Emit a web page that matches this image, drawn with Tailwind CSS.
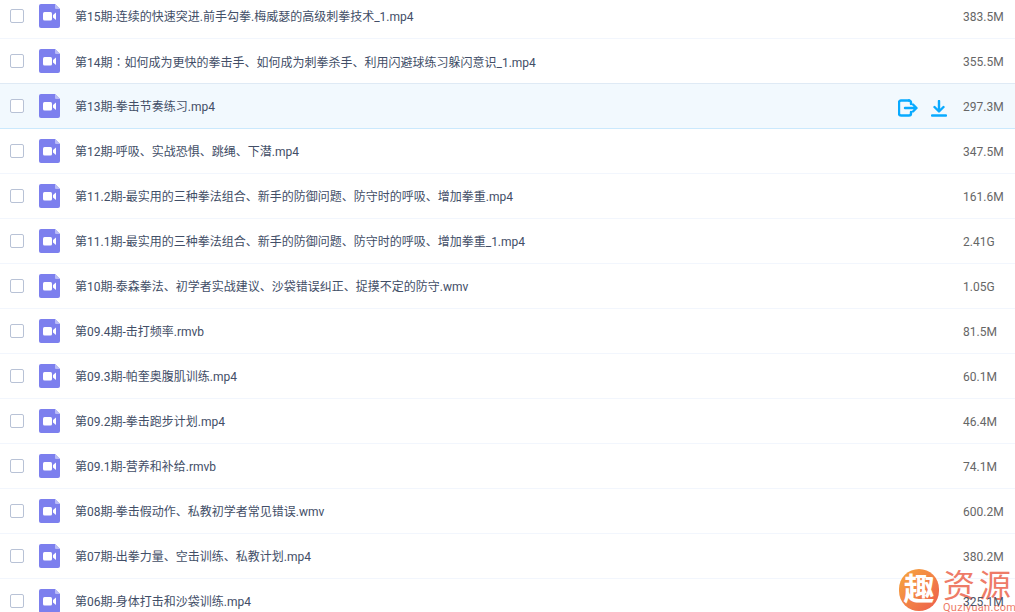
<!DOCTYPE html>
<html lang="en">
<head>
    <meta charset="UTF-8">
    <title>文件列表</title>
    <script src="https://cdn.jsdelivr.net/npm/@tailwindcss/browser@4"></script>
</head>
<body class="bg-white h-[612px] overflow-hidden relative font-['Roboto','Noto_Sans_CJK_SC',sans-serif] text-xs text-[#424e67]">
    <svg class="hidden">
        <symbol id="video" viewBox="0 0 21 24">
            <path d="M2 0H16L21 5V22A2 2 0 0 1 19 24H2A2 2 0 0 1 0 22V2A2 2 0 0 1 2 0Z" fill="#7c7fee"/>
            <path d="M16 0L21 5H17A1 1 0 0 1 16 4Z" fill="#b9bbf6"/>
            <rect x="4" y="8" width="9" height="8.5" rx="1.5" fill="#fff"/>
            <path d="M14 11L17 8.5V16L14 13.5Z" fill="#fff"/>
        </symbol>
    </svg>

    <ul id="list" class="-mt-[6px]">
        <li class="h-[45px] flex items-center border-b border-[#f2f6fd]">
            <span class="w-[14px] h-[14px] ml-[10px] border border-[#b8c2d6] rounded-[2px] bg-white"></span>
            <svg class="w-[21px] h-[24px] ml-[15px]"><use href="#video"/></svg>
            <span class="ml-[15px] flex-1 pt-[2px]">第15期-连续的快速突进.前手勾拳.梅威瑟的高级刺拳技术_1.mp4</span>
            <span class="w-[52px] pt-[2px] text-[#666]">383.5M</span>
        </li>
        <li class="h-[45px] flex items-center border-b border-[#dfeaf5]">
            <span class="w-[14px] h-[14px] ml-[10px] border border-[#b8c2d6] rounded-[2px] bg-white"></span>
            <svg class="w-[21px] h-[24px] ml-[15px]"><use href="#video"/></svg>
            <span class="ml-[15px] flex-1 pt-[2px]">第14期<span class="font-['Noto_Sans_CJK_TC',sans-serif]">：</span>如何成为更快的拳击手、如何成为刺拳杀手、利用闪避球练习躲闪意识_1.mp4</span>
            <span class="w-[52px] pt-[2px] text-[#666]">355.5M</span>
        </li>
        <li class="h-[45px] flex items-center border-b border-[#cbe9fd] bg-[#f2f9fe]">
            <span class="w-[14px] h-[14px] ml-[10px] border border-[#b8c2d6] rounded-[2px] bg-white"></span>
            <svg class="w-[21px] h-[24px] ml-[15px]"><use href="#video"/></svg>
            <span class="ml-[15px] flex-1 pt-[2px]">第13期-拳击节奏练习.mp4</span>
            <svg class="w-[20px] h-[18px] mr-[13px] mt-[4px]" viewBox="0 0 20 18" fill="none" stroke="#09aaff" stroke-width="2.400" stroke-linecap="round" stroke-linejoin="round">
                <path d="M11 1.5H3A2 2 0 0 0 1 3.500V14.500A2 2 0 0 0 3 16.500H11A2 2 0 0 0 13 14.500V13"/>
                <path d="M13 5V3.500A2 2 0 0 0 11 1.500"/>
                <path d="M7 9H18M15 5.500L18.500 9L15 12.500"/>
            </svg>
            <svg class="w-[16px] h-[17px] mr-[16px] mt-[4px]" viewBox="0 0 16 17" fill="none" stroke="#09aaff" stroke-width="2.400" stroke-linecap="round" stroke-linejoin="round">
                <path d="M8 1V11M3.500 7L8 11.500L12.500 7"/>
                <path d="M1 15.500H15"/>
            </svg>
            <span class="w-[52px] pt-[2px] text-[#666]">297.3M</span>
        </li>
        <li class="h-[45px] flex items-center border-b border-[#f2f6fd]">
            <span class="w-[14px] h-[14px] ml-[10px] border border-[#b8c2d6] rounded-[2px] bg-white"></span>
            <svg class="w-[21px] h-[24px] ml-[15px]"><use href="#video"/></svg>
            <span class="ml-[15px] flex-1 pt-[2px]">第12期-呼吸、实战恐惧、跳绳、下潜.mp4</span>
            <span class="w-[52px] pt-[2px] text-[#666]">347.5M</span>
        </li>
        <li class="h-[45px] flex items-center border-b border-[#f2f6fd]">
            <span class="w-[14px] h-[14px] ml-[10px] border border-[#b8c2d6] rounded-[2px] bg-white"></span>
            <svg class="w-[21px] h-[24px] ml-[15px]"><use href="#video"/></svg>
            <span class="ml-[15px] flex-1 pt-[2px]">第11.2期-最实用的三种拳法组合、新手的防御问题、防守时的呼吸、增加拳重.mp4</span>
            <span class="w-[52px] pt-[2px] text-[#666]">161.6M</span>
        </li>
        <li class="h-[45px] flex items-center border-b border-[#f2f6fd]">
            <span class="w-[14px] h-[14px] ml-[10px] border border-[#b8c2d6] rounded-[2px] bg-white"></span>
            <svg class="w-[21px] h-[24px] ml-[15px]"><use href="#video"/></svg>
            <span class="ml-[15px] flex-1 pt-[2px]">第11.1期-最实用的三种拳法组合、新手的防御问题、防守时的呼吸、增加拳重_1.mp4</span>
            <span class="w-[52px] pt-[2px] text-[#666]">2.41G</span>
        </li>
        <li class="h-[45px] flex items-center border-b border-[#f2f6fd]">
            <span class="w-[14px] h-[14px] ml-[10px] border border-[#b8c2d6] rounded-[2px] bg-white"></span>
            <svg class="w-[21px] h-[24px] ml-[15px]"><use href="#video"/></svg>
            <span class="ml-[15px] flex-1 pt-[2px]">第10期-泰森拳法、初学者实战建议、沙袋错误纠正、捉摸不定的防守.wmv</span>
            <span class="w-[52px] pt-[2px] text-[#666]">1.05G</span>
        </li>
        <li class="h-[45px] flex items-center border-b border-[#f2f6fd]">
            <span class="w-[14px] h-[14px] ml-[10px] border border-[#b8c2d6] rounded-[2px] bg-white"></span>
            <svg class="w-[21px] h-[24px] ml-[15px]"><use href="#video"/></svg>
            <span class="ml-[15px] flex-1 pt-[2px]">第09.4期-击打频率.rmvb</span>
            <span class="w-[52px] pt-[2px] text-[#666]">81.5M</span>
        </li>
        <li class="h-[45px] flex items-center border-b border-[#f2f6fd]">
            <span class="w-[14px] h-[14px] ml-[10px] border border-[#b8c2d6] rounded-[2px] bg-white"></span>
            <svg class="w-[21px] h-[24px] ml-[15px]"><use href="#video"/></svg>
            <span class="ml-[15px] flex-1 pt-[2px]">第09.3期-帕奎奥腹肌训练.mp4</span>
            <span class="w-[52px] pt-[2px] text-[#666]">60.1M</span>
        </li>
        <li class="h-[45px] flex items-center border-b border-[#f2f6fd]">
            <span class="w-[14px] h-[14px] ml-[10px] border border-[#b8c2d6] rounded-[2px] bg-white"></span>
            <svg class="w-[21px] h-[24px] ml-[15px]"><use href="#video"/></svg>
            <span class="ml-[15px] flex-1 pt-[2px]">第09.2期-拳击跑步计划.mp4</span>
            <span class="w-[52px] pt-[2px] text-[#666]">46.4M</span>
        </li>
        <li class="h-[45px] flex items-center border-b border-[#f2f6fd]">
            <span class="w-[14px] h-[14px] ml-[10px] border border-[#b8c2d6] rounded-[2px] bg-white"></span>
            <svg class="w-[21px] h-[24px] ml-[15px]"><use href="#video"/></svg>
            <span class="ml-[15px] flex-1 pt-[2px]">第09.1期-营养和补给.rmvb</span>
            <span class="w-[52px] pt-[2px] text-[#666]">74.1M</span>
        </li>
        <li class="h-[45px] flex items-center border-b border-[#f2f6fd]">
            <span class="w-[14px] h-[14px] ml-[10px] border border-[#b8c2d6] rounded-[2px] bg-white"></span>
            <svg class="w-[21px] h-[24px] ml-[15px]"><use href="#video"/></svg>
            <span class="ml-[15px] flex-1 pt-[2px]">第08期-拳击假动作、私教初学者常见错误.wmv</span>
            <span class="w-[52px] pt-[2px] text-[#666]">600.2M</span>
        </li>
        <li class="h-[45px] flex items-center border-b border-[#f2f6fd]">
            <span class="w-[14px] h-[14px] ml-[10px] border border-[#b8c2d6] rounded-[2px] bg-white"></span>
            <svg class="w-[21px] h-[24px] ml-[15px]"><use href="#video"/></svg>
            <span class="ml-[15px] flex-1 pt-[2px]">第07期-出拳力量、空击训练、私教计划.mp4</span>
            <span class="w-[52px] pt-[2px] text-[#666]">380.2M</span>
        </li>
        <li class="h-[45px] flex items-center border-b border-[#f2f6fd]">
            <span class="w-[14px] h-[14px] ml-[10px] border border-[#b8c2d6] rounded-[2px] bg-white"></span>
            <svg class="w-[21px] h-[24px] ml-[15px]"><use href="#video"/></svg>
            <span class="ml-[15px] flex-1 pt-[2px]">第06期-身体打击和沙袋训练.mp4</span>
            <span class="w-[52px] pt-[2px] text-[#4a5568] relative z-10">325.1M</span>
        </li>
    </ul>

    <!-- watermark sits over the last row -->
    <div class="absolute left-[899px] top-[569px] flex items-start">
        <span class="w-[40px] h-[42px] rounded-full bg-gradient-to-br from-[#f6a83a] to-[#ec5a4c] text-white font-bold text-[31px] leading-[41px] text-center overflow-hidden">趣</span>
        <div class="ml-[4px] -mt-[3px] text-[#ee7b68]">
            <div class="text-[32px] leading-[35px] tracking-[4px] whitespace-nowrap font-['Noto_Sans_CJK_SC',sans-serif]">资源</div>
            <div class="text-[11px] leading-[11px] mt-[1px] tracking-[0.3px] whitespace-nowrap">Quziyuan.com</div>
        </div>
    </div>
</body>
</html>
